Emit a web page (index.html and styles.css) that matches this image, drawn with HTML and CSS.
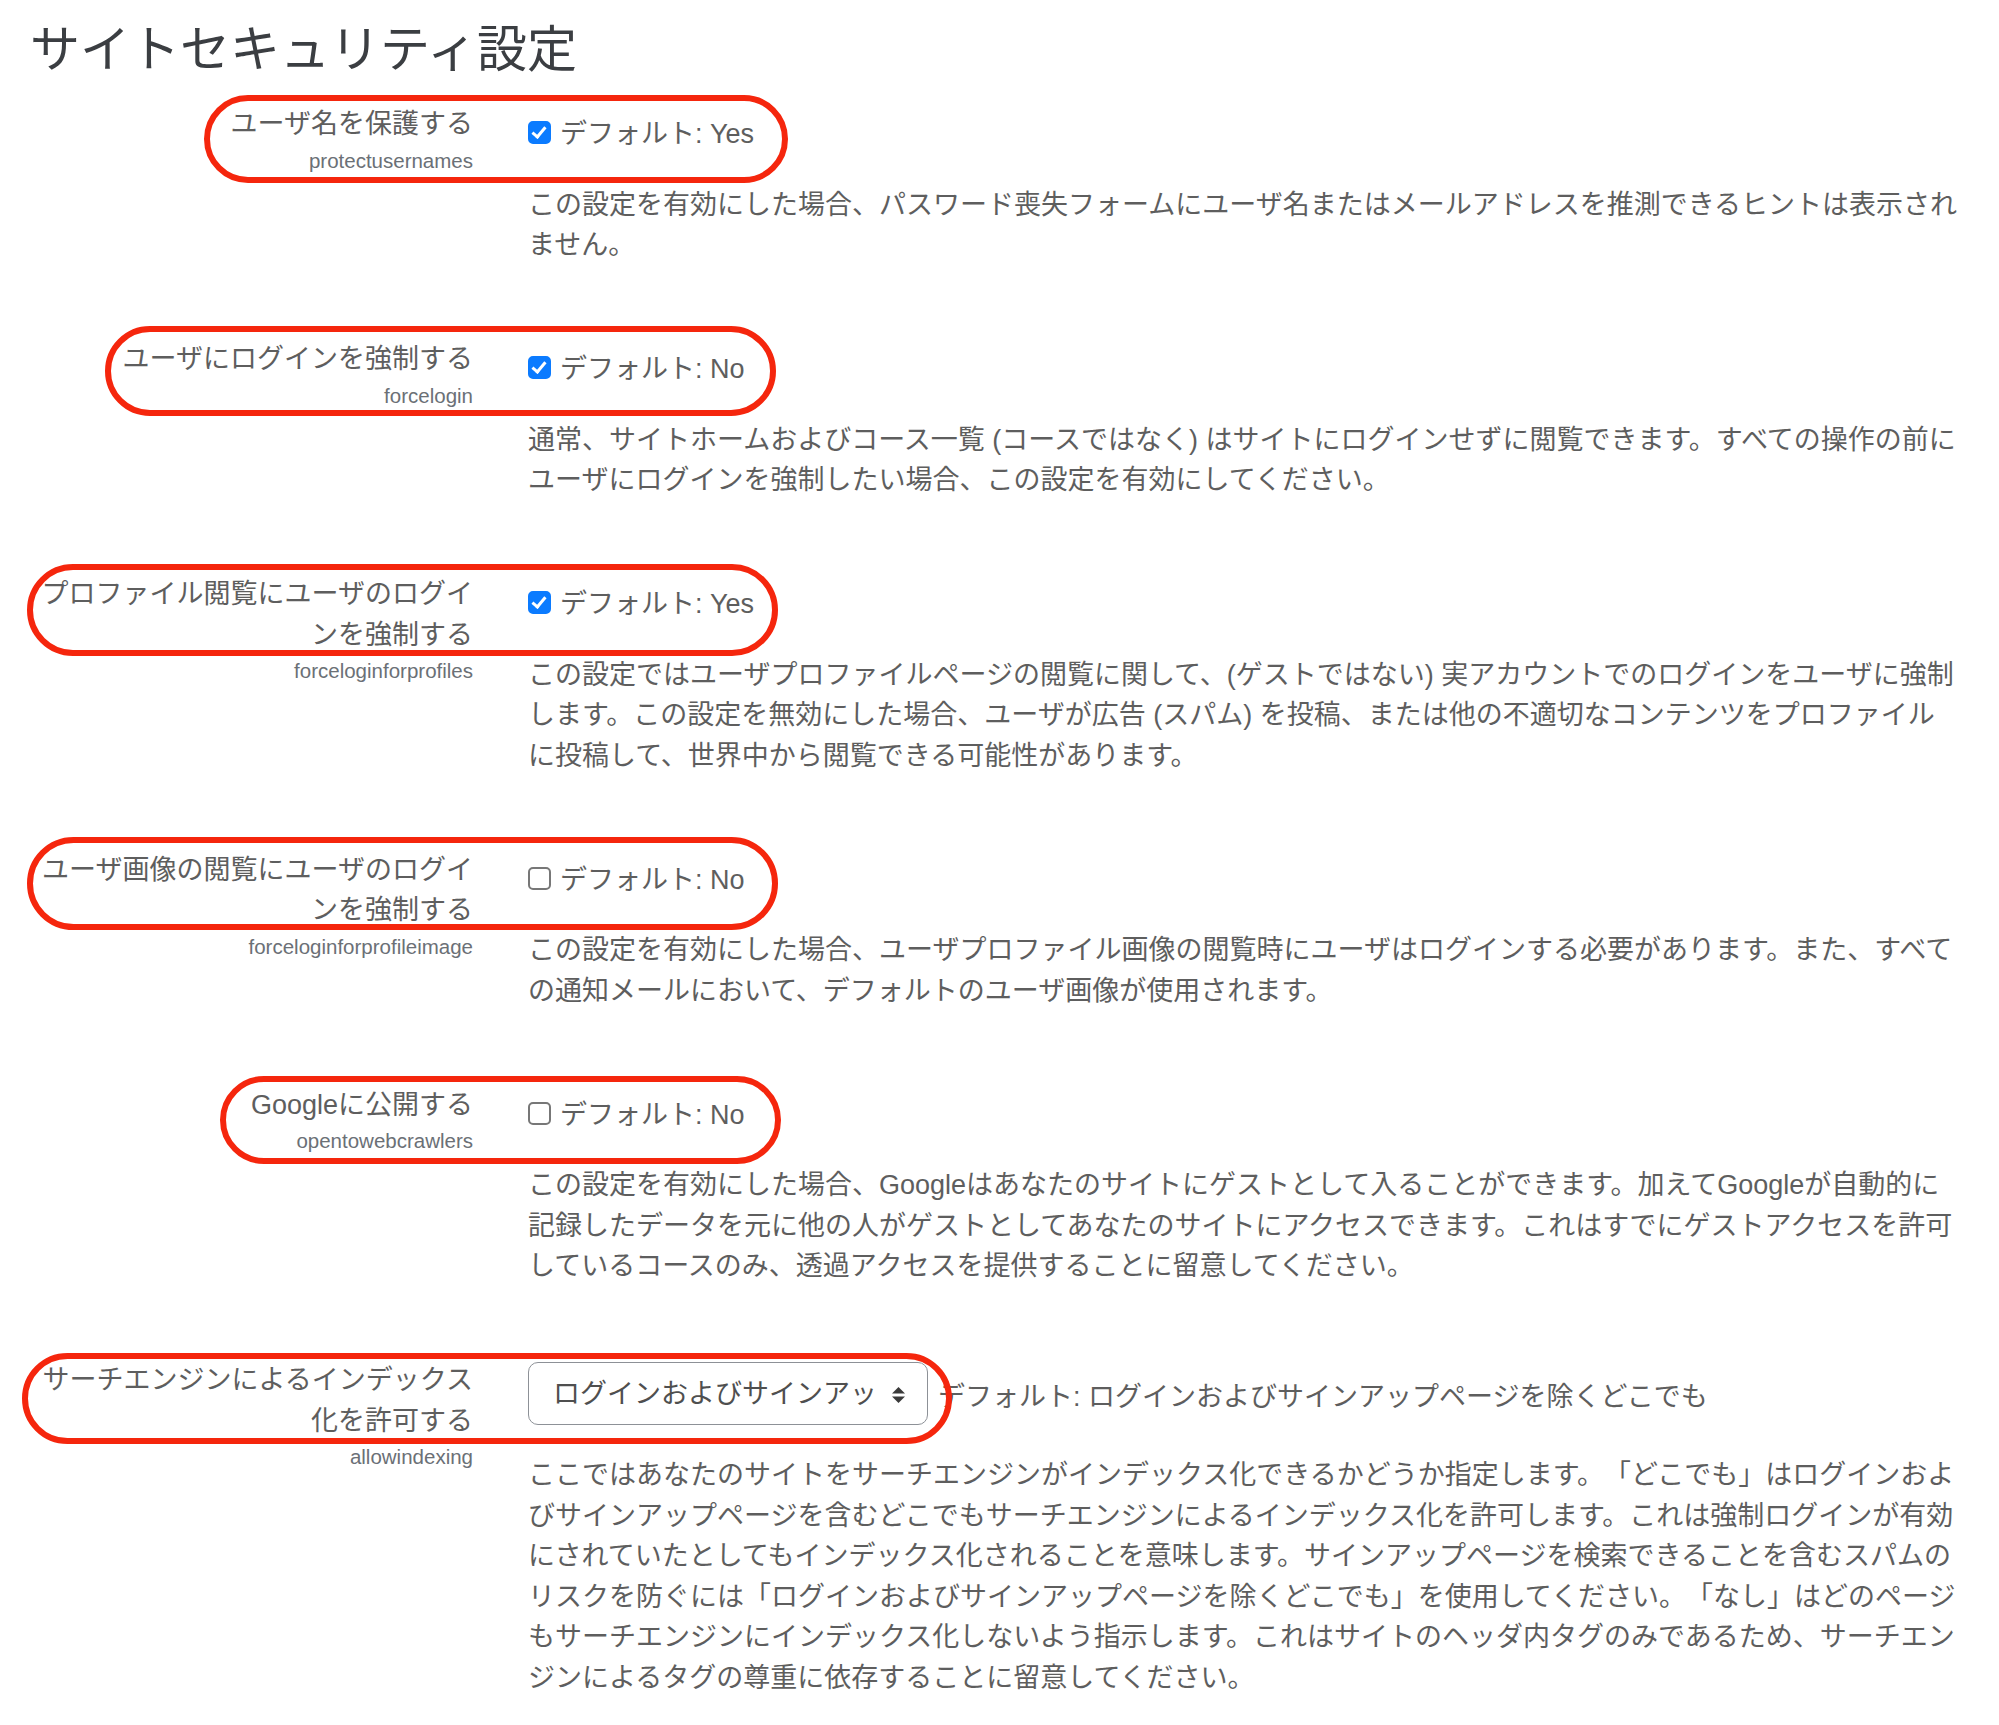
FILE: index.html
```html
<!DOCTYPE html>
<html lang="ja">
	<head>
		<meta charset="UTF-8">
		<meta name="viewport" content="width=device-width, initial-scale=1.0" />
		<title>サイトセキュリティ設定</title>
		<link rel="stylesheet" href="styles.css">
	</head>
	<body>
		<div class="page">
			<h2>サイトセキュリティ設定</h2>

			<!-- ユーザ名を保護する -->
			<div class="setting">
				<div class="setting-label">
					<label for="id_protectusernames">ユーザ名を保護する</label>
					<span class="shortname">protectusernames</span>
				</div>
				<div class="setting-body">
					<div class="setting-control">
						<input type="checkbox" id="id_protectusernames" checked>
						<span class="default">デフォルト: Yes</span>
					</div>
					<div class="setting-desc">この設定を有効にした場合、パスワード喪失フォームにユーザ名またはメールアドレスを推測できるヒントは表示され<br />ません。</div>
				</div>
				<span class="mark mark-protect"></span>
			</div>

			<!-- ユーザにログインを強制する -->
			<div class="setting">
				<div class="setting-label">
					<label for="id_forcelogin">ユーザにログインを強制する</label>
					<span class="shortname">forcelogin</span>
				</div>
				<div class="setting-body">
					<div class="setting-control">
						<input type="checkbox" id="id_forcelogin" checked>
						<span class="default">デフォルト: No</span>
					</div>
					<div class="setting-desc">通常、サイトホームおよびコース一覧 (コースではなく) はサイトにログインせずに閲覧できます。すべての操作の前に<br />ユーザにログインを強制したい場合、この設定を有効にしてください。</div>
				</div>
				<span class="mark mark-forcelogin"></span>
			</div>

			<!-- プロファイル閲覧 -->
			<div class="setting">
				<div class="setting-label">
					<label for="id_forceloginforprofiles">プロファイル閲覧にユーザのログインを強制する</label>
					<span class="shortname">forceloginforprofiles</span>
				</div>
				<div class="setting-body">
					<div class="setting-control">
						<input type="checkbox" id="id_forceloginforprofiles" checked>
						<span class="default">デフォルト: Yes</span>
					</div>
					<div class="setting-desc">この設定ではユーザプロファイルページの閲覧に関して、(ゲストではない) 実アカウントでのログインをユーザに強制<br />します。この設定を無効にした場合、ユーザが広告 (スパム) を投稿、または他の不適切なコンテンツをプロファイル<br />に投稿して、世界中から閲覧できる可能性があります。</div>
				</div>
				<span class="mark mark-profiles"></span>
			</div>

			<!-- ユーザ画像 -->
			<div class="setting">
				<div class="setting-label">
					<label for="id_forceloginforprofileimage">ユーザ画像の閲覧にユーザのログインを強制する</label>
					<span class="shortname">forceloginforprofileimage</span>
				</div>
				<div class="setting-body">
					<div class="setting-control">
						<input type="checkbox" id="id_forceloginforprofileimage">
						<span class="default">デフォルト: No</span>
					</div>
					<div class="setting-desc">この設定を有効にした場合、ユーザプロファイル画像の閲覧時にユーザはログインする必要があります。また、すべて<br />の通知メールにおいて、デフォルトのユーザ画像が使用されます。</div>
				</div>
				<span class="mark mark-image"></span>
			</div>

			<!-- Googleに公開する -->
			<div class="setting">
				<div class="setting-label">
					<label for="id_opentowebcrawlers">Googleに公開する</label>
					<span class="shortname">opentowebcrawlers</span>
				</div>
				<div class="setting-body">
					<div class="setting-control">
						<input type="checkbox" id="id_opentowebcrawlers">
						<span class="default">デフォルト: No</span>
					</div>
					<div class="setting-desc">この設定を有効にした場合、Googleはあなたのサイトにゲストとして入ることができます。加えてGoogleが自動的に<br />記録したデータを元に他の人がゲストとしてあなたのサイトにアクセスできます。これはすでにゲストアクセスを許可<br />しているコースのみ、透過アクセスを提供することに留意してください。</div>
				</div>
				<span class="mark mark-google"></span>
			</div>

			<!-- インデックス化 -->
			<div class="setting">
				<div class="setting-label">
					<label for="id_allowindexing">サーチエンジンによるインデックス化を許可する</label>
					<span class="shortname">allowindexing</span>
				</div>
				<div class="setting-body">
					<div class="setting-control">
						<span class="select-wrap">
							<select id="id_allowindexing">
								<option value="0" selected>ログインおよびサインアップページを除くどこでも</option>
								<option value="1">どこでも</option>
								<option value="2">なし</option>
							</select>
							<svg width="13" height="16" viewBox="0 0 13 16"><polygon points="6.5,0 13,6.5 0,6.5" fill="#3a3a3a"/><polygon points="0,9.5 13,9.5 6.5,16" fill="#3a3a3a"/></svg>
						</span>
						<span class="default">デフォルト: ログインおよびサインアップページを除くどこでも</span>
					</div>
					<div class="setting-desc">ここではあなたのサイトをサーチエンジンがインデックス化できるかどうか指定します。「どこでも」はログインおよ<br />びサインアップページを含むどこでもサーチエンジンによるインデックス化を許可します。これは強制ログインが有効<br />にされていたとしてもインデックス化されることを意味します。サインアップページを検索できることを含むスパムの<br />リスクを防ぐには「ログインおよびサインアップページを除くどこでも」を使用してください。「なし」はどのページ<br />もサーチエンジンにインデックス化しないよう指示します。これはサイトのヘッダ内タグのみであるため、サーチエン<br />ジンによるタグの尊重に依存することに留意してください。</div>
				</div>
				<span class="mark mark-indexing"></span>
			</div>
		</div>
	</body>
</html>
```

FILE: styles.css
```css
body {
	margin: 0;
	background: #fff;
	color: #5e5e5e;
	font-family: "Liberation Sans", "Noto Sans CJK JP", sans-serif;
	font-size: 27px;
	line-height: 1.5;
	text-spacing-trim: space-all;
}

.page {
	padding: 20px 10px 0 30px;
}

.page h2 {
	margin: 0 0 24px;
	font-size: 50px;
	font-weight: normal;
	line-height: 60px;
	color: #3b3e42;
}

/* 設定の行 */
.setting {
	position: relative;
	display: grid;
	grid-template-columns: 443px 1460px;
	column-gap: 55px;
	margin-bottom: 73.5px;
}

.setting:last-child {
	margin-bottom: 0;
}

.setting-label {
	text-align: right;
}

.setting-label label {
	display: block;
}

.setting-label .shortname {
	display: block;
	margin-top: 1px;
	font-size: 20.5px;
	line-height: 1.5;
	color: #6b7076;
}

.setting-control {
	display: flex;
	align-items: center;
	gap: 9px;
	padding-top: 10px;
}

.setting-control input[type=checkbox] {
	-webkit-appearance: none;
	appearance: none;
	position: relative;
	flex: none;
	box-sizing: border-box;
	width: 23px;
	height: 23px;
	margin: -3px 0 0 0;
	border: 2px solid #777;
	border-radius: 5px;
	background: #fff;
}

.setting-control input[type=checkbox]:checked {
	border-color: #0b7bff;
	background: #0b7bff;
}

.setting-control input[type=checkbox]:checked::after {
	content: "";
	position: absolute;
	left: 5px;
	top: 1px;
	width: 5px;
	height: 11px;
	border: solid #fff;
	border-width: 0 3px 3px 0;
	transform: rotate(40deg);
}

.setting-desc {
	margin-top: 30px;
	white-space: nowrap;
}

/* セレクト */
.select-wrap {
	position: relative;
	flex: none;
	align-self: flex-start;
	margin-top: -8px;
	margin-right: 1px;
}

.select-wrap select {
	-webkit-appearance: none;
	appearance: none;
	box-sizing: border-box;
	width: 400px;
	height: 63px;
	margin: 0;
	padding: 0 50px 0 24px;
	border: 1px solid #8d9197;
	border-radius: 10px;
	background: #fff;
	color: #4f4f4f;
	font-family: inherit;
	font-size: 27px;
}

.select-wrap svg {
	position: absolute;
	right: 23px;
	top: 25px;
	pointer-events: none;
}

/* 赤い丸印 */
.mark {
	position: absolute;
	box-sizing: border-box;
	border: 6px solid #f5260d;
	border-radius: 48px;
	pointer-events: none;
}

.mark-protect {
	left: 174px;
	top: -9px;
	width: 584px;
	height: 88px;
}

.mark-forcelogin {
	left: 75px;
	top: -13px;
	width: 671px;
	height: 90px;
}

.mark-profiles {
	left: -3px;
	top: -10px;
	width: 751px;
	height: 92px;
}

.mark-image {
	left: -3px;
	top: -13px;
	width: 751px;
	height: 93px;
}

.mark-google {
	left: 190px;
	top: -9px;
	width: 561px;
	height: 88px;
}

.mark-indexing {
	left: -8px;
	top: -7px;
	width: 930px;
	height: 91px;
}
```
